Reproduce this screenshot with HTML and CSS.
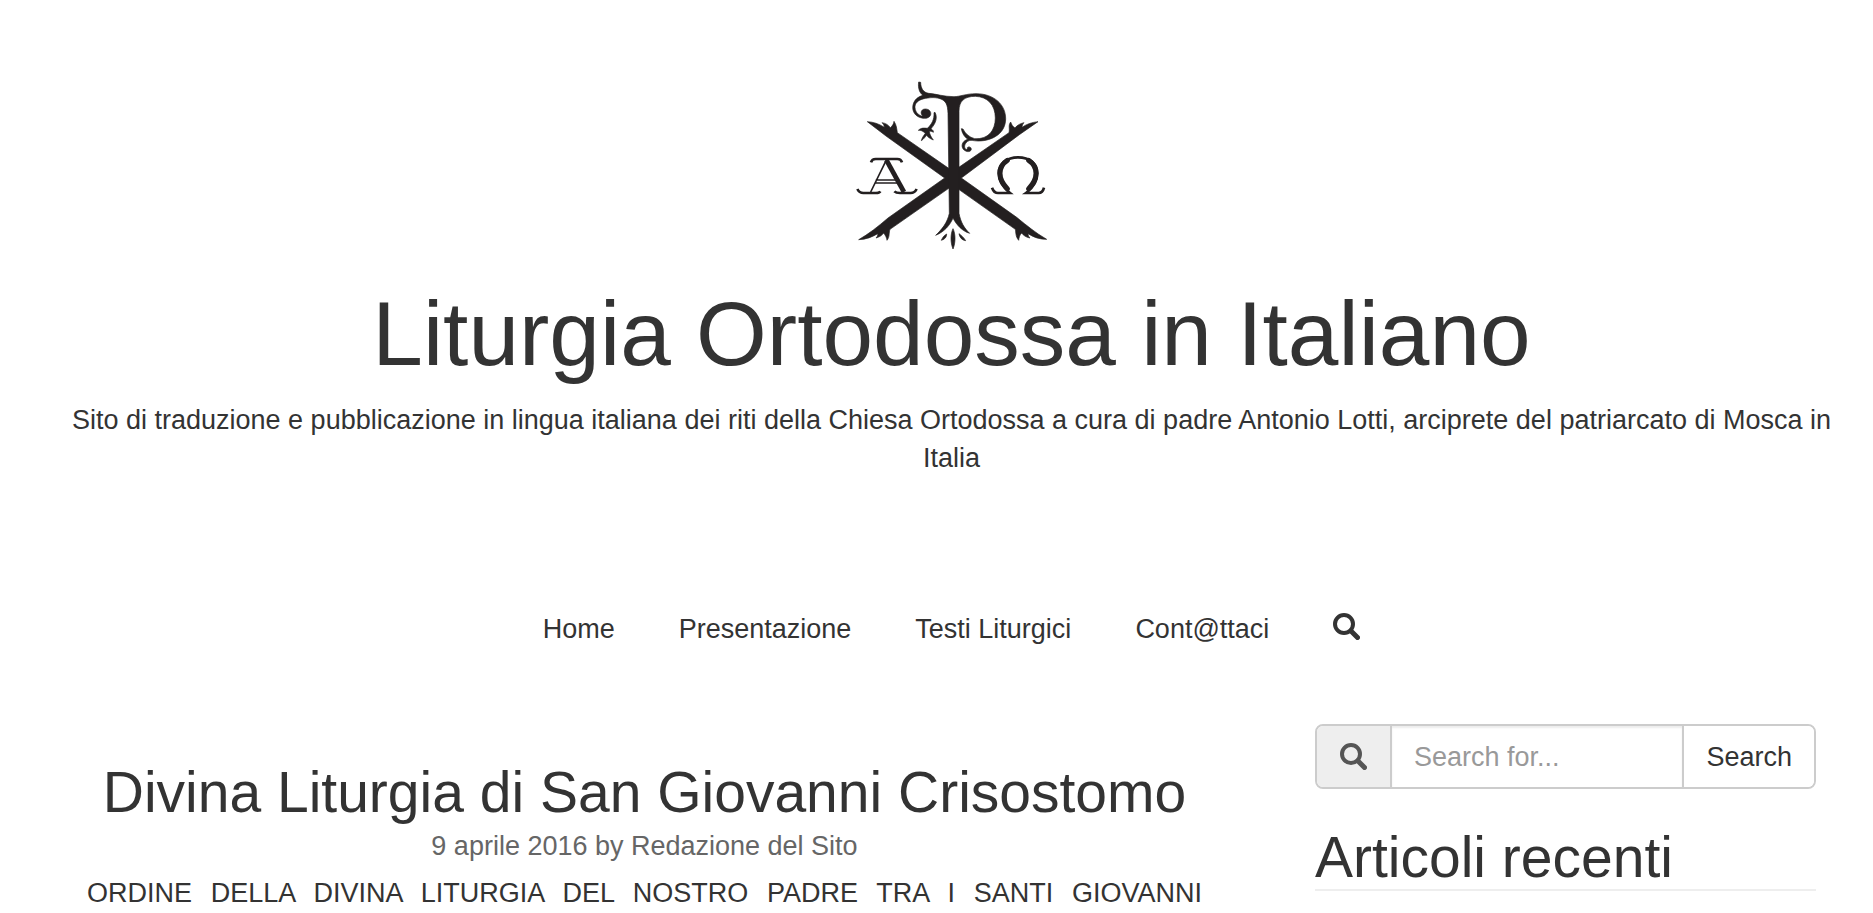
FILE: index.html
```html
<!DOCTYPE html>
<html lang="it">
<head>
    <meta charset="UTF-8">
    <meta name="viewport" content="width=device-width, initial-scale=1.0">
    <title>Liturgia Ortodossa in Italiano</title>
    <link rel="stylesheet" href="styles.css">
</head>
<body>
    <header class="site-header">
        <a href="#" class="logo" aria-label="Home">
            <svg viewBox="34 30 600 510" fill="none" stroke="#231f20">
                <!-- X -->
                <g fill="#231f20" stroke="#231f20" stroke-width="2">
                    <path d="M80 155 C98 156 114 161 131 172 C131 166 128 162 124 158 C136 160 143 165 149 173 C155 168 159 162 160 154 C168 166 168 176 170 188 L337 304 L505 188 C508 176 502 166 510 156 C513 164 516 170 523 174 C529 166 537 161 550 158 C546 162 544 167 544 172 C558 162 574 157 592 155 L536 194 L362 324 L528 442 C560 468 584 488 618 508 C596 508 580 502 562 491 C562 497 565 501 568 504 C556 502 548 496 543 489 C537 495 535 502 534 511 C524 499 526 488 524 478 L337 346 L148 478 C144 488 148 500 139 511 C138 502 134 496 129 489 C124 496 117 501 106 504 C110 500 112 496 111 491 C94 501 78 508 54 509 C84 492 112 470 142 444 L312 324 L136 198 Z"/>
                    <!-- P -->
                    <path d="M322 130 C321 104 316 92 298 86 C278 80 262 84 250 86 C230 91 222 101 223 113 C224 128 236 138 247 138 C238 132 240 117 254 117 C266 117 272 126 270 134 C267 144 254 147 243 144 C224 140 213 124 217 105 C221 89 232 80 247 76 C238 70 231 56 234 36 L240 37 C240 54 248 68 264 70 C288 72 310 80 340 80 C358 80 376 71 406 71 C460 71 495 104 495 146 C495 188 458 213 412 213 C398 213 389 208 381 214 C373 220 369 229 374 237 C378 240 381 238 380 233 C383 229 391 230 392 237 C392 244 383 247 375 243 C363 237 361 224 369 215 C373 211 378 209 382 208 C372 202 364 190 362 176 L367 177 C374 191 386 202 402 206 C442 209 464 182 464 144 C464 104 440 80 404 79 C370 79 355 94 355 124 L355 430 C360 456 370 474 387 490 C366 484 348 466 337 444 C328 466 310 486 285 496 C304 478 320 458 326 430 Z"/>
                    <path d="M283 127 C291 142 286 160 271 176 C276 180 279 182 278 187 C274 184 270 183 266 184 C267 194 272 202 278 210 C268 206 261 201 258 196 C252 202 250 207 242 212 C244 204 248 198 254 190 C246 183 241 180 233 181 C241 173 250 174 260 175 C274 162 281 148 280 128 Z"/>
                    <path d="M337 476 C345 492 345 518 337 537 C329 518 329 492 337 476 Z"/>
                    <path d="M318 492 C318 502 312 508 302 511 C306 502 310 496 318 492 Z"/>
                    <path d="M355 491 C363 497 370 503 375 512 C365 511 357 503 355 491 Z"/>
                </g>
                <!-- Alpha -->
                <path d="M91 277 Q94 267 105 267 L170 267 Q181 267 184 277" stroke-width="8"/>
                <path d="M138 268 L90 366 M105 330 L170 330 M103 339 L174 339" stroke-width="5"/>
                <path d="M137 270 L190 366" stroke-width="14"/>
                <path d="M50 357 Q56 369 68 369 L106 369 Q116 369 119 364 M161 364 Q166 369 178 369 L210 369 Q222 369 228 357" stroke-width="8"/>
                <!-- Omega -->
                <path d="M454 353 Q460 369 472 369 L508 369 C482 348 474 326 474 310 C474 280 500 262 532 262 C566 262 590 280 590 310 C590 328 582 350 556 369 L594 369 Q606 369 610 353" stroke-width="8"/>
                <path d="M500 356 C482 338 478 322 478 310 C478 294 486 280 500 271 M564 271 C578 280 586 294 586 310 C586 324 580 340 564 356" stroke-width="15" stroke-linecap="round"/>
            </svg>
        </a>
        <h1>Liturgia Ortodossa in Italiano</h1>
        <p class="tagline">Sito di traduzione e pubblicazione in lingua italiana dei riti della Chiesa Ortodossa a cura di padre Antonio Lotti, arciprete del patriarcato di Mosca in Italia</p>
    </header>

    <nav class="main-nav">
        <ul>
            <li><a href="#">Home</a></li>
            <li><a href="#">Presentazione</a></li>
            <li><a href="#">Testi Liturgici</a></li>
            <li><a href="#">Cont@ttaci</a></li>
            <li>
                <a href="#" aria-label="Search">
                    <svg class="icon-search" viewBox="0 0 27 27"><circle cx="11" cy="11" r="9"/><path d="M18 18 L24.5 24.5"/></svg>
                </a>
            </li>
        </ul>
    </nav>

    <div class="content">
        <main>
            <article>
                <h2>Divina Liturgia di San Giovanni Crisostomo</h2>
                <p class="post-meta">9 aprile 2016 by Redazione del Sito</p>
                <p class="post-text">ORDINE DELLA DIVINA LITURGIA DEL NOSTRO PADRE TRA I SANTI GIOVANNI</p>
            </article>
        </main>

        <aside class="sidebar">
            <form class="search-form">
                <label for="search" aria-label="Search">
                    <svg class="icon-search" viewBox="0 0 27 27"><circle cx="11" cy="11" r="9"/><path d="M18 18 L24.5 24.5"/></svg>
                </label>
                <input type="text" id="search" name="s" placeholder="Search for...">
                <button type="submit">Search</button>
            </form>
            <h2>Articoli recenti</h2>
        </aside>
    </div>
</body>
</html>
```

FILE: styles.css
```css
* {
    box-sizing: border-box;
}

body {
    margin: 0;
    background-color: #fff;
    color: #333;
    font-family: Arial, "Liberation Sans", sans-serif;
    font-size: 27px;
    line-height: 38px;
}

a {
    color: #333;
    text-decoration: none;
}

h1, h2, p, ul {
    margin: 0;
    font-weight: normal;
}

h1 {
    font-size: 91px;
    line-height: 100px;
}

h2 {
    font-size: 57px;
    line-height: 62px;
}

.site-header {
    padding: 80px 27px 0 57px;
    text-align: center;
}

.logo {
    display: block;
    margin-bottom: 34px;
}

.logo svg {
    display: block;
    width: 200px;
    height: 170px;
    margin: 0 auto;
}

.tagline {
    margin-top: 17px;
}

/* Menu */
.main-nav {
    padding: 0 27px 0 57px;
    margin-top: 133px;
}

.main-nav ul {
    display: flex;
    justify-content: center;
    gap: 64px;
    padding: 0;
    list-style: none;
}

.icon-search {
    width: 27px;
    height: 27px;
    fill: none;
    stroke: currentColor;
    stroke-width: 4;
}

.icon-search path {
    stroke-width: 5;
    stroke-linecap: round;
}

.main-nav .icon-search {
    display: block;
    margin-top: 3px;
}

/* Contenuto */
.content {
    display: grid;
    grid-template-columns: minmax(0, 1115fr) minmax(0, 501fr);
    gap: 113px;
    padding: 76px 57px 0 87px;
}

article {
    padding-top: 37px;
    text-align: center;
}

.post-meta {
    margin-top: 4px;
    color: #666;
}

.post-text {
    margin-top: 9px;
    text-align: justify;
    text-align-last: justify;
}

.search-form {
    display: flex;
    height: 65px;
    border: 2px solid #ccc;
    border-radius: 8px;
    overflow: hidden;
}

.search-form label {
    display: flex;
    align-items: center;
    padding: 0 23px;
    background-color: #eee;
    color: #555;
}

.search-form input {
    flex: 1;
    min-width: 0;
    padding: 0 22px;
    border: solid #ccc;
    border-width: 0 2px;
    box-shadow: inset 0 2px 2px rgba(0, 0, 0, 0.075);
    color: #555;
    font: inherit;
}

.search-form input::placeholder {
    color: #999;
}

.search-form button {
    padding: 0 22px;
    border: none;
    background-color: #fff;
    color: #333;
    font: inherit;
    cursor: pointer;
}

.sidebar h2 {
    margin-top: 37px;
    padding-bottom: 1px;
    border-bottom: 2px solid #eee;
}
```
